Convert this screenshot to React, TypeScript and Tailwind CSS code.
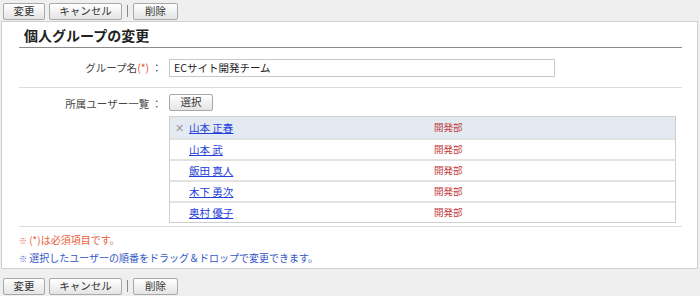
import React from "react";

const font = { fontFamily: '"Noto Sans CJK JP", "Noto Sans", sans-serif' };

function Btn({ children, className = "" }: { children: React.ReactNode; className?: string }) {
  return (
    <button
      className={`h-[17px] rounded-[2px] border border-[#a9a9a9] bg-gradient-to-b from-white to-[#e4e4e4] text-[10.5px] leading-none text-[#333] ${className}`}
    >
      {children}
    </button>
  );
}

function Toolbar() {
  return (
    <div className="flex h-[20px] items-center pl-[3px]">
      <Btn className="w-[42px]">変更</Btn>
      <Btn className="ml-[4px] w-[73px]">キャンセル</Btn>
      <span className="mx-[5px] h-[12px] w-px bg-[#888]" />
      <Btn className="w-[45px]">削除</Btn>
    </div>
  );
}

const members = ["山本 正春", "山本 武", "飯田 真人", "木下 勇次", "奥村 優子"];

export default function App() {
  return (
    <div className="h-[296px] w-[700px] overflow-hidden bg-[#efefef]" style={font}>
      <div className="pt-[1px]">
        <Toolbar />
      </div>
      <div className="ml-[1px] h-[248px] w-[697px] border border-[#cfcfcf] bg-white pl-[17px] pr-[15px]">
        <div className="border-b border-[#8a8a8a] pb-[2px] pl-[5px] pt-[3px] text-[14px] font-bold leading-[20px] text-[#222]">
          個人グループの変更
        </div>
        <div className="flex h-[40px] items-center border-b border-[#dcdcdc]">
          <div className="w-[143px] text-right text-[10.5px] text-[#444]">
            グループ名<span className="text-[#e05a2a]">(*)</span> ：
          </div>
          <div className="ml-[7px] flex h-[18px] w-[386px] items-center border border-[#c8c8c8] pl-[4px] text-[10.5px] text-[#222]">
            ECサイト開発チーム
          </div>
        </div>
        <div className="flex h-[139px] border-b border-[#dcdcdc] pt-[6px]">
          <div className="w-[143px] pt-[2px] text-right text-[10.5px] leading-[16px] text-[#444]">所属ユーザー一覧 ：</div>
          <div className="ml-[7px] flex flex-col">
            <Btn className="w-[44px]">選択</Btn>
            <div className="mt-[5px] w-[507px] border border-[#cfcfcf]">
              {members.map((m, i) => (
                <div
                  key={m}
                  className={`flex h-[21px] items-center text-[10.5px] ${i > 0 ? "border-t-2 border-[#e2e2e2]" : ""} ${i === 0 ? "bg-[#e3eaf2]" : "bg-white"}`}
                >
                  <span className="w-[19px] pl-[5px] text-[11px] text-[#999]">{i === 0 ? "✕" : ""}</span>
                  <span className="w-[245px] text-[#2540d8] underline">{m}</span>
                  <span className="text-[9.5px] text-[#c23a3a]">開発部</span>
                </div>
              ))}
            </div>
          </div>
        </div>
        <div className="pt-[4px] text-[10px] leading-[17px]">
          <div className="text-[#e8603a]">
            <span className="text-[8px]">※</span> (*)は必須項目です。
          </div>
          <div className="text-[#3458c8]">
            <span className="text-[8px]">※</span> 選択したユーザーの順番をドラッグ＆ドロップで変更できます。
          </div>
        </div>
      </div>
      <div className="pt-[7px]">
        <Toolbar />
      </div>
    </div>
  );
}
